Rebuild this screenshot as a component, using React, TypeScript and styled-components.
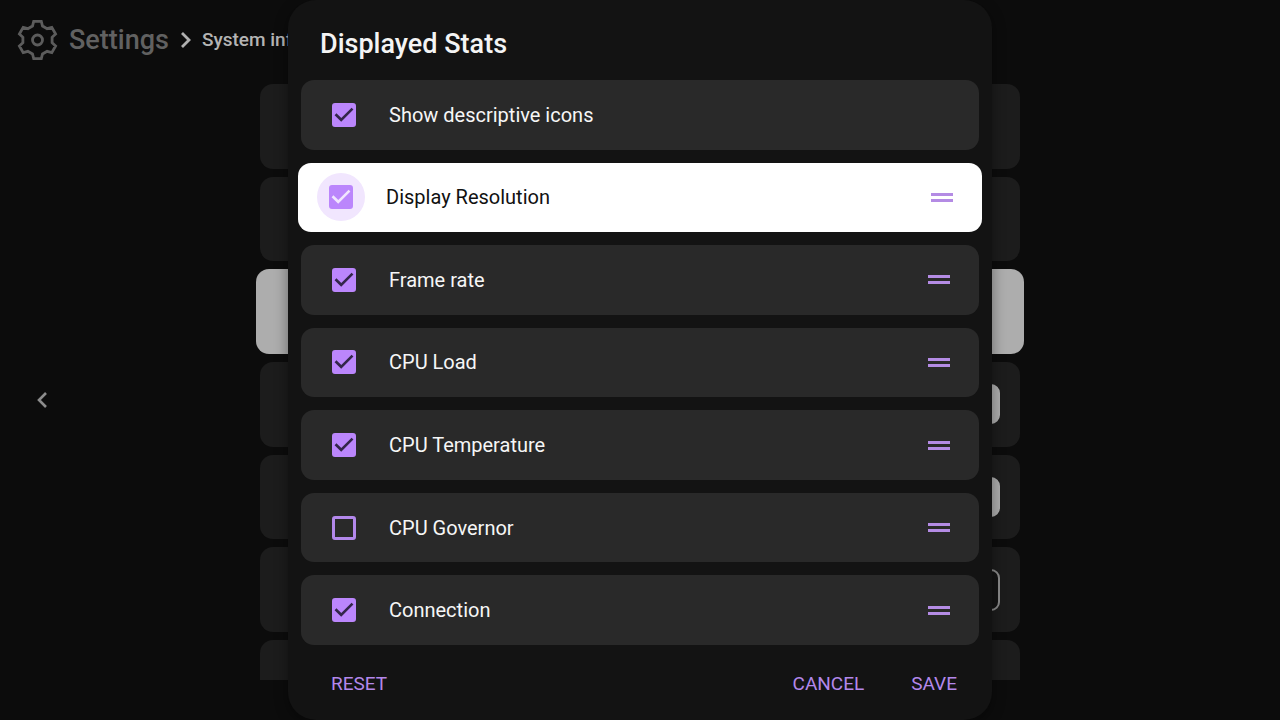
import React, { useState } from "react";
import styled, { createGlobalStyle } from "styled-components";

const GlobalStyle = createGlobalStyle`
  *, *::before, *::after { box-sizing: border-box; }
  html, body, #root { height: 100%; }
  body {
    margin: 0;
    background: #0c0c0c;
    color: #fff;
    font-family: Roboto, "Liberation Sans", sans-serif;
    overflow: hidden;
  }
`;

const Screen = styled.div`
  display: grid;
  min-height: 100vh;
  overflow: hidden;
`;

const Page = styled.main`
  grid-area: 1 / 1;
  display: flex;
  flex-direction: column;
  height: 100vh;
  padding-bottom: 40px;
`;

const Header = styled.header`
  display: flex;
  align-items: center;
  height: 84px;
  padding: 0 16px 4px;
  flex: none;
`;

const SettingsTitle = styled.h1`
  margin: 0 10px;
  font-size: 27px;
  line-height: 32px;
  font-weight: 500;
  color: #616161;
`;

const Crumb = styled.span`
  margin-left: 8px;
  font-size: 19px;
  line-height: 24px;
  font-weight: 500;
  color: #b4b4b4;
  white-space: nowrap;
`;

const Body = styled.div`
  flex: 1;
  min-height: 0;
  display: grid;
  grid-template-columns: 1fr minmax(0, 760px) 1fr;
`;

const BackButton = styled.button`
  align-self: center;
  justify-self: start;
  display: flex;
  margin: 36px 0 0 30px;
  padding: 0;
  border: 0;
  background: none;
  color: #8c8c8c;
`;

const SettingList = styled.div`
  display: grid;
  grid-template-rows: repeat(6, 1fr) 40px;
  gap: 8px;
`;

const Setting = styled.div<{ $focused?: boolean; $cut?: boolean }>`
  display: flex;
  align-items: center;
  justify-content: flex-end;
  padding: 0 20px;
  border-radius: ${(p) => (p.$cut ? "13px 13px 0 0" : "13px")};
  background: ${(p) => (p.$focused ? "#adadad" : "#1c1c1c")};
  margin: 0 ${(p) => (p.$focused ? "-4px" : "0")};
`;

const Toggle = styled.input`
  appearance: none;
  margin: 0;
  width: 72px;
  height: 42px;
  border: 2px solid #8a8a8a;
  border-radius: 9px;
  background: #141414;
  &:checked {
    height: 40px;
    border-color: #adadad;
    background: #adadad;
  }
`;

const Dialog = styled.form`
  grid-area: 1 / 1;
  justify-self: center;
  display: flex;
  flex-direction: column;
  width: min(704px, 100%);
  height: 100vh;
  padding: 0 13px;
  border-radius: 28px;
  background: #131313;
  box-shadow: 0 4px 14px rgba(0, 0, 0, 0.4);
  z-index: 1;
`;

const DialogTitle = styled.h2`
  margin: 0;
  padding: 28px 19px 20px;
  font-size: 27px;
  line-height: 32px;
  font-weight: 500;
  color: #f4f4f4;
`;

const StatList = styled.div`
  flex: 1;
  display: grid;
  grid-auto-rows: 1fr;
  gap: 13px;
`;

const StatRow = styled.div<{ $focused?: boolean }>`
  display: flex;
  align-items: center;
  margin: 0 ${(p) => (p.$focused ? "-3px" : "0")};
  padding: 0 29px 0 31px;
  border-radius: 13px;
  background: ${(p) => (p.$focused ? "#fff" : "#292929")};
  color: ${(p) => (p.$focused ? "#111" : "#f6f6f6")};
`;

const StatLabel = styled.label`
  flex: 1;
  padding-left: 33px;
  font-size: 20px;
  line-height: 24px;
`;

const CheckSlot = styled.span<{ $focused?: boolean }>`
  display: grid;
  width: 24px;
  height: 24px;
  border-radius: 50%;
  box-shadow: ${(p) => (p.$focused ? "0 0 0 12px #f1e6fe" : "none")};
  background: ${(p) => (p.$focused ? "#f1e6fe" : "none")};

  & > * { grid-area: 1 / 1; }
  & > svg { pointer-events: none; }
`;

const CheckInput = styled.input`
  appearance: none;
  margin: 0;
  width: 24px;
  height: 24px;
  border: 3px solid #b388eb;
  border-radius: 3px;
  outline: none;
  &:checked { background: #bb86fc; border-color: #bb86fc; }
`;

const Handle = styled.button`
  display: grid;
  gap: 3px;
  width: 22px;
  padding: 0;
  border: 0;
  background: none;
  &::before, &::after {
    content: "";
    height: 3px;
    background: #b48be4;
  }
`;

const Actions = styled.footer`
  display: flex;
  align-items: center;
  gap: 47px;
  height: 75px;
  padding: 2px 22px 0 30px;
`;

const Action = styled.button<{ $first?: boolean }>`
  margin: 0 ${(p) => (p.$first ? "auto" : "0")} 0 0;
  padding: 0;
  border: 0;
  background: none;
  color: #b388eb;
  font-family: inherit;
  font-size: 19px;
  line-height: 24px;
`;

const GearIcon = () => (
  <svg width="43" height="42" viewBox="-21.5 -21 43 42" fill="none" stroke="#5c5c5c" strokeWidth="2.8" aria-hidden="true">
    <path d="M-3.8-18.7H3.8L5-14L9.6-11.3L14.3-12.65L18.1-6.05L14.6-2.7V2.7L18.1 6.05L14.3 12.65L9.6 11.3L5 14L3.8 18.7H-3.8L-5 14L-9.6 11.3L-14.3 12.65L-18.1 6.05L-14.6 2.7V-2.7L-18.1-6.05L-14.3-12.65L-9.6-11.3L-5-14Z" />
    <circle r="5" />
  </svg>
);

const ChevronRight = () => (
  <svg width="15" height="18" viewBox="0 0 15 18" fill="none" stroke="#b0b0b0" strokeWidth="2.8" aria-hidden="true">
    <path d="M3 2l7 7-7 7" />
  </svg>
);

const ChevronLeft = () => (
  <svg width="24" height="24" viewBox="0 0 24 24" fill="none" stroke="currentColor" strokeWidth="2.6" aria-hidden="true">
    <path d="M16 5l-7 7 7 7" />
  </svg>
);

type Stat = { id: string; label: string; sortable: boolean; focused?: boolean };

const stats: Stat[] = [
  { id: "icons", label: "Show descriptive icons", sortable: false },
  { id: "resolution", label: "Display Resolution", sortable: true, focused: true },
  { id: "framerate", label: "Frame rate", sortable: true },
  { id: "cpu-load", label: "CPU Load", sortable: true },
  { id: "cpu-temp", label: "CPU Temperature", sortable: true },
  { id: "cpu-governor", label: "CPU Governor", sortable: true },
  { id: "connection", label: "Connection", sortable: true },
];

function StatItem({ stat, checked, onToggle }: { stat: Stat; checked: boolean; onToggle: () => void }) {
  return (
    <StatRow $focused={stat.focused}>
      <CheckSlot $focused={stat.focused}>
        <CheckInput id={stat.id} type="checkbox" checked={checked} onChange={onToggle} />
        {checked && (
          <svg width="24" height="24" viewBox="0 0 24 24" fill="none" stroke={stat.focused ? "#f1e6fe" : "#33264a"} strokeWidth="2.6" aria-hidden="true">
            <path d="M3.5 11.2l5.7 5.6L20.5 5.6" />
          </svg>
        )}
      </CheckSlot>
      <StatLabel htmlFor={stat.id}>{stat.label}</StatLabel>
      {stat.sortable && <Handle type="button" aria-label={`Reorder ${stat.label}`} />}
    </StatRow>
  );
}

export default function App() {
  const [enabled, setEnabled] = useState<Record<string, boolean>>({
    icons: true,
    resolution: true,
    framerate: true,
    "cpu-load": true,
    "cpu-temp": true,
    connection: true,
  });

  return (
    <>
      <GlobalStyle />
      <Screen>
        <Page inert>
          <Header>
            <GearIcon />
            <SettingsTitle>Settings</SettingsTitle>
            <ChevronRight />
            <Crumb>System info</Crumb>
          </Header>
          <Body>
            <BackButton type="button" aria-label="Back">
              <ChevronLeft />
            </BackButton>
            <SettingList>
              <Setting />
              <Setting />
              <Setting $focused />
              <Setting>
                <Toggle type="checkbox" aria-label="Option 4" defaultChecked />
              </Setting>
              <Setting>
                <Toggle type="checkbox" aria-label="Option 5" defaultChecked />
              </Setting>
              <Setting>
                <Toggle type="checkbox" aria-label="Option 6" />
              </Setting>
              <Setting $cut />
            </SettingList>
          </Body>
        </Page>
        <Dialog role="dialog" aria-labelledby="dialog-title" onSubmit={(e) => e.preventDefault()}>
          <DialogTitle id="dialog-title">Displayed Stats</DialogTitle>
          <StatList>
            {stats.map((stat) => (
              <StatItem
                key={stat.id}
                stat={stat}
                checked={!!enabled[stat.id]}
                onToggle={() => setEnabled((s) => ({ ...s, [stat.id]: !s[stat.id] }))}
              />
            ))}
          </StatList>
          <Actions>
            <Action type="reset" $first>RESET</Action>
            <Action type="button">CANCEL</Action>
            <Action type="submit">SAVE</Action>
          </Actions>
        </Dialog>
      </Screen>
    </>
  );
}
